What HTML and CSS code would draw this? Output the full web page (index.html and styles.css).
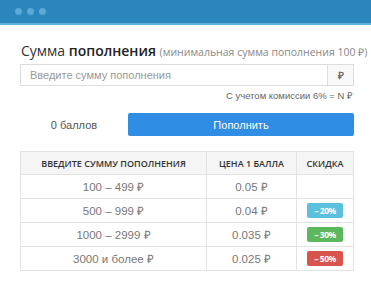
FILE: index.html
```html
<!DOCTYPE html>
<html lang="ru">
<head>
    <meta charset="UTF-8">
    <meta name="viewport" content="width=device-width, initial-scale=1.0">
    <title>Пополнение</title>
    <link rel="stylesheet" href="styles.css">
</head>
<body>
    <div class="window">
        <div class="titlebar">
            <span class="dot"></span>
            <span class="dot"></span>
            <span class="dot"></span>
        </div>

        <div class="content">
            <h1>Сумма <b>пополнения</b> <small>(минимальная сумма пополнения 100 ₽)</small></h1>

            <div class="amount">
                <input type="text" placeholder="Введите сумму пополнения">
                <span class="addon">₽</span>
            </div>
            <div class="fee">С учетом комиссии 6% = N ₽</div>

            <div class="actions">
                <div class="points">0 баллов</div>
                <button>Пополнить</button>
            </div>

            <table class="prices">
                <thead>
                    <tr>
                        <th>Введите сумму пополнения</th>
                        <th>Цена 1 балла</th>
                        <th>Скидка</th>
                    </tr>
                </thead>
                <tbody>
                    <tr>
                        <td>100 – 499 ₽</td>
                        <td>0.05 ₽</td>
                        <td></td>
                    </tr>
                    <tr>
                        <td>500 – 999 ₽</td>
                        <td>0.04 ₽</td>
                        <td><span class="label info">– 20%</span></td>
                    </tr>
                    <tr>
                        <td>1000 – 2999 ₽</td>
                        <td>0.035 ₽</td>
                        <td><span class="label success">– 30%</span></td>
                    </tr>
                    <tr>
                        <td>3000 и более ₽</td>
                        <td>0.025 ₽</td>
                        <td><span class="label danger">– 50%</span></td>
                    </tr>
                </tbody>
            </table>
        </div>
    </div>
</body>
</html>
```

FILE: styles.css
```css
body {
    margin: 0;
    padding: 0;
    background-color: #fff;
    font-family: 'Liberation Sans', Arial, sans-serif;
    color: #555;
}

.window {
    width: 371px;
    height: 291px;
    background-color: #fff;
    overflow: hidden;
}

.titlebar {
    height: 23px;
    background-color: #2a86bb;
    border-bottom: 2px solid #62b3df;
    display: flex;
    align-items: center;
    gap: 5px;
    padding-left: 15px;
}

.dot {
    width: 7px;
    height: 7px;
    border-radius: 50%;
    background-color: #5aa9d6;
}

.content {
    padding: 17px 17px 0 20px;
}

h1 {
    font-family: 'Open Sans', sans-serif;
    font-weight: normal;
    font-size: 14px;
    color: #333;
    margin: 0 0 3px 1px;
    line-height: 18px;
    white-space: nowrap;
}

h1 b {
    font-weight: 600;
    color: #222;
}

h1 small {
    font-size: 10.5px;
    color: #888;
}

.amount {
    display: flex;
    height: 22px;
    border: 1px solid #ddd;
    box-sizing: border-box;
}

.amount input {
    flex: 1;
    border: none;
    padding: 0 9px;
    font-family: 'Liberation Sans', Arial, sans-serif;
    font-size: 11px;
    color: #555;
    outline: none;
    min-width: 0;
}

.amount input::placeholder {
    color: #999;
}

.addon {
    width: 25px;
    border-left: 1px solid #ddd;
    background-color: #f9f9f9;
    font-size: 10px;
    font-weight: bold;
    color: #666;
    display: flex;
    align-items: center;
    justify-content: center;
}

.fee {
    text-align: right;
    font-size: 9.5px;
    color: #666;
    margin: 4px 1px 0 0;
    line-height: 11px;
}

.actions {
    display: flex;
    align-items: center;
    margin-top: 12px;
    height: 23px;
}

.points {
    width: 108px;
    text-align: center;
    font-size: 11px;
    color: #555;
}

.actions button {
    flex: 1;
    height: 23px;
    border: none;
    border-radius: 2px;
    background-color: #2f8de4;
    color: #fff;
    font-family: 'Liberation Sans', Arial, sans-serif;
    font-size: 11px;
    cursor: pointer;
}

.prices {
    width: 100%;
    margin-top: 15px;
    border-collapse: collapse;
    font-size: 11.5px;
}

.prices th, .prices td {
    border: 1px solid #e3e3e3;
    text-align: center;
    padding: 0;
}

.prices th {
    height: 22px;
    background-color: #f5f5f5;
    font-family: 'Open Sans', sans-serif;
    font-weight: 600;
    font-size: 9px;
    text-transform: uppercase;
    color: #333;
}

.prices th:nth-child(1) { width: 185px; }
.prices th:nth-child(2) { width: 89px; }

.prices td {
    height: 23px;
    color: #777;
}

.label {
    display: inline-block;
    width: 36px;
    height: 15px;
    line-height: 15px;
    border-radius: 2px;
    color: #fff;
    font-family: 'Open Sans', sans-serif;
    font-weight: bold;
    font-size: 8.5px;
    letter-spacing: -0.5px;
}

.info { background-color: #5bc0de; }
.success { background-color: #5cb85c; }
.danger { background-color: #d9534f; }
```
